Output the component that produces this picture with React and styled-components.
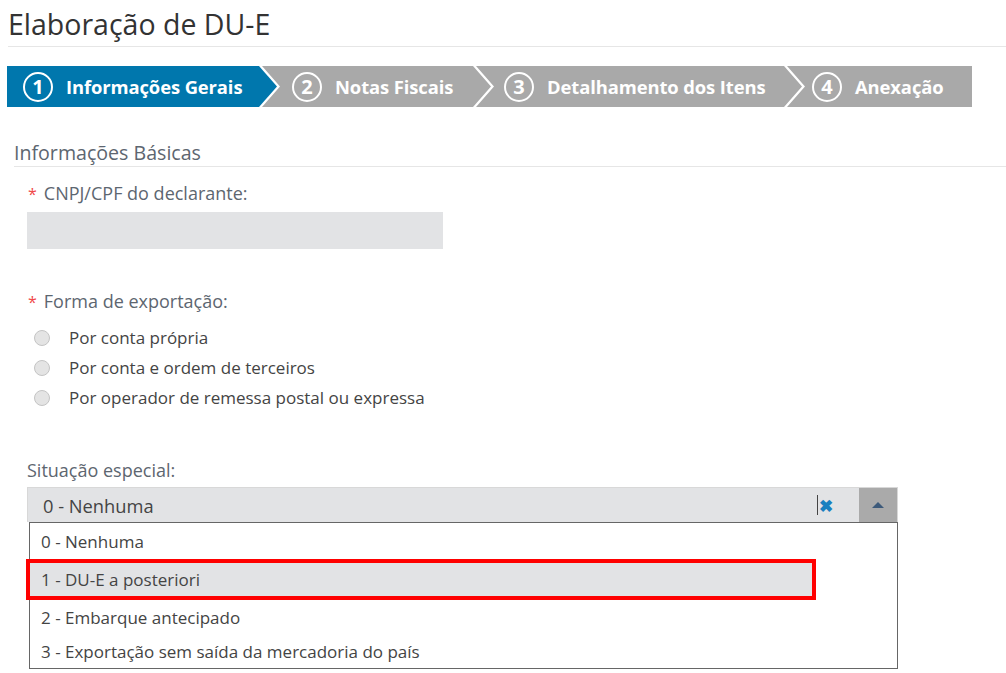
import React from "react";
import styled, { createGlobalStyle } from "styled-components";

const Global = createGlobalStyle`
  html, body { margin: 0; padding: 0; background: #fff; }
  body { font-family: "Open Sans", "Noto Sans", sans-serif; color: #555; }
  * { box-sizing: border-box; }
`;

const Page = styled.div`
  width: 1006px;
  height: 673px;
  overflow: hidden;
  padding-top: 8px;
`;

const Title = styled.h1`
  margin: 0 0 0 8px;
  padding-bottom: 5px;
  font-size: 28.5px;
  font-weight: 400;
  line-height: 33px;
  color: #333;
  border-bottom: 1px solid #e6e6e6;
`;

const Steps = styled.div`
  display: flex;
  margin: 19px 0 0 7px;
  height: 41px;
`;

const NOTCH = 18;

const Step = styled.div`
  display: flex;
  align-items: center;
  gap: 13px;
  width: ${(p) => p.$w}px;
  height: 100%;
  margin-left: ${(p) => (p.$first ? 0 : -15)}px;
  padding-left: ${(p) => (p.$first ? 16 : NOTCH + p.$pad)}px;
  background: ${(p) => (p.$active ? "#0077ad" : "#a9a9a9")};
  color: #fff;
  clip-path: ${(p) =>
    p.$last
      ? `polygon(0 0, 100% 0, 100% 100%, 0 100%, ${NOTCH}px 50%)`
      : p.$first
      ? `polygon(0 0, calc(100% - ${NOTCH}px) 0, 100% 50%, calc(100% - ${NOTCH}px) 100%, 0 100%)`
      : `polygon(0 0, calc(100% - ${NOTCH}px) 0, 100% 50%, calc(100% - ${NOTCH}px) 100%, 0 100%, ${NOTCH}px 50%)`};
`;

const StepNum = styled.span`
  width: 30px;
  height: 30px;
  border: 2px solid #fff;
  border-radius: 50%;
  display: flex;
  align-items: center;
  justify-content: center;
  font-size: 20px;
  font-weight: 700;
  line-height: 1;
  flex-shrink: 0;
`;

const StepLabel = styled.span`
  font-size: 18.4px;
  font-weight: 700;
  white-space: nowrap;
  letter-spacing: -0.1px;
`;

const Section = styled.div`
  margin: 33px 0 0 14px;
`;

const SectionTitle = styled.h2`
  margin: 0;
  font-size: 19.6px;
  font-weight: 400;
  color: #5d6670;
  line-height: 26px;
  border-bottom: 1px solid #e6e6e6;
`;

const Form = styled.div`
  padding-left: 13px;
`;

const Label = styled.div`
  display: flex;
  align-items: baseline;
  gap: 7px;
  font-size: 18px;
  color: #5d6670;
  line-height: 24px;
  margin-top: ${(p) => p.$mt}px;
`;

const Star = styled.span`
  color: #f04848;
  font-size: 16px;
  margin-left: 1px;
`;

const TextInput = styled.div`
  width: 416px;
  height: 37px;
  margin-top: 6px;
  background: #e2e3e5;
`;

const RadioList = styled.div`
  display: flex;
  flex-direction: column;
  gap: 8px;
  margin-top: 13px;
  padding-left: 7px;
`;

const RadioRow = styled.label`
  display: flex;
  align-items: center;
  gap: 19px;
  font-size: 17px;
  color: #444;
  line-height: 22px;
`;

const RadioDot = styled.span`
  width: 16px;
  height: 16px;
  border-radius: 50%;
  background: #e4e4e4;
  border: 1px solid #c4c4c4;
  flex-shrink: 0;
`;

const SelectWrap = styled.div`
  width: 871px;
  margin-top: 5px;
`;

const SelectBox = styled.div`
  display: flex;
  align-items: center;
  height: 35px;
  background: #e2e3e5;
  border: 1px solid #d8d8d8;
  border-bottom: none;
`;

const SelectValue = styled.span`
  flex: 1;
  padding-left: 15px;
  font-size: 18.3px;
  color: #444;
`;

const Caret = styled.span`
  width: 1px;
  height: 20px;
  background: #444;
  margin-right: 1px;
`;

const Clear = styled.span`
  color: #1a7fc0;
  font-size: 17px;
  font-weight: 700;
  width: 40px;
  line-height: 1;
`;

const ArrowBtn = styled.span`
  width: 38px;
  height: 100%;
  background: #aaa;
  display: flex;
  align-items: center;
  justify-content: center;
`;

const Triangle = styled.span`
  width: 0;
  height: 0;
  border-left: 6px solid transparent;
  border-right: 6px solid transparent;
  border-bottom: 6px solid #3d5a7a;
`;

const Menu = styled.ul`
  list-style: none;
  margin: 0 0 0 2px;
  padding: 0;
  width: 869px;
  border: 1px solid #666;
  background: #fff;
`;

const Option = styled.li`
  height: ${(p) => p.$h}px;
  display: flex;
  align-items: center;
  padding-left: 11px;
  font-size: 17px;
  color: #444;
  ${(p) =>
    p.$marked &&
    `
    width: 790px;
    margin-left: -4px;
    background: #e2e3e5;
    outline: 4px solid #f00;
    outline-offset: -4px;
    padding-left: 15px;
  `}
`;

const steps = [
  { n: 1, label: "Informações Gerais", w: 270, active: true },
  { n: 2, label: "Notas Fiscais", w: 229, pad: 12 },
  { n: 3, label: "Detalhamento dos Itens", w: 326, pad: 10 },
  { n: 4, label: "Anexação", w: 185, pad: 7 },
];

export default function App() {
  return (
    <Page>
      <Global />
      <Title>Elaboração de DU-E</Title>
      <Steps>
        {steps.map((s, i) => (
          <Step
            key={s.n}
            $w={s.w}
            $pad={s.pad || 0}
            $first={i === 0}
            $last={i === steps.length - 1}
            $active={s.active}
          >
            <StepNum>{s.n}</StepNum>
            <StepLabel>{s.label}</StepLabel>
          </Step>
        ))}
      </Steps>
      <Section>
        <SectionTitle>Informações Básicas</SectionTitle>
        <Form>
          <Label $mt={14}>
            <Star>*</Star>CNPJ/CPF do declarante:
          </Label>
          <TextInput />
          <Label $mt={40}>
            <Star>*</Star>Forma de exportação:
          </Label>
          <RadioList>
            <RadioRow>
              <RadioDot />
              Por conta própria
            </RadioRow>
            <RadioRow>
              <RadioDot />
              Por conta e ordem de terceiros
            </RadioRow>
            <RadioRow>
              <RadioDot />
              Por operador de remessa postal ou expressa
            </RadioRow>
          </RadioList>
          <Label $mt={49}>Situação especial:</Label>
          <SelectWrap>
            <SelectBox>
              <SelectValue>0 - Nenhuma</SelectValue>
              <Caret />
              <Clear>✖</Clear>
              <ArrowBtn>
                <Triangle />
              </ArrowBtn>
            </SelectBox>
            <Menu>
              <Option $h={36}>0 - Nenhuma</Option>
              <Option $h={41} $marked>
                1 - DU-E a posteriori
              </Option>
              <Option $h={35}>2 - Embarque antecipado</Option>
              <Option $h={33}>3 - Exportação sem saída da mercadoria do país</Option>
            </Menu>
          </SelectWrap>
        </Form>
      </Section>
    </Page>
  );
}
